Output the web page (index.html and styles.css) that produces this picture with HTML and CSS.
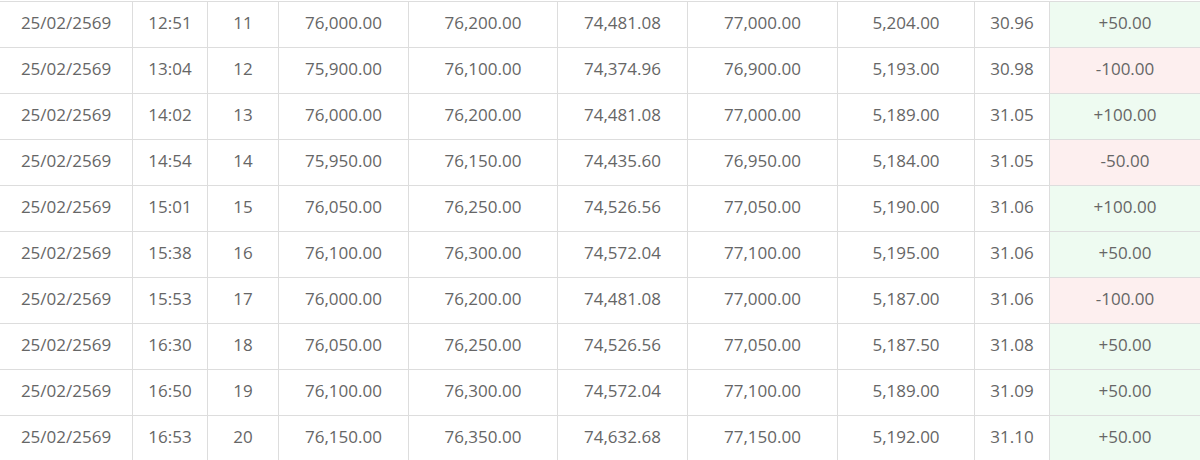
FILE: index.html
```html
<!DOCTYPE html>
<html lang="th">
<head>
<meta charset="utf-8">
<title>Gold price history</title>
<link rel="stylesheet" href="styles.css">
</head>
<body>
<div class="wrap">
<table class="prices">
<colgroup>
<col class="c-date"><col class="c-time"><col class="c-no"><col class="c-a"><col class="c-b"><col class="c-c"><col class="c-d"><col class="c-e"><col class="c-f"><col class="c-g">
</colgroup>
<tbody>
<tr><td>25/02/2569</td><td>12:51</td><td>11</td><td>76,000.00</td><td>76,200.00</td><td>74,481.08</td><td>77,000.00</td><td>5,204.00</td><td>30.96</td><td class="up">+50.00</td></tr>
<tr><td>25/02/2569</td><td>13:04</td><td>12</td><td>75,900.00</td><td>76,100.00</td><td>74,374.96</td><td>76,900.00</td><td>5,193.00</td><td>30.98</td><td class="down">-100.00</td></tr>
<tr><td>25/02/2569</td><td>14:02</td><td>13</td><td>76,000.00</td><td>76,200.00</td><td>74,481.08</td><td>77,000.00</td><td>5,189.00</td><td>31.05</td><td class="up">+100.00</td></tr>
<tr><td>25/02/2569</td><td>14:54</td><td>14</td><td>75,950.00</td><td>76,150.00</td><td>74,435.60</td><td>76,950.00</td><td>5,184.00</td><td>31.05</td><td class="down">-50.00</td></tr>
<tr><td>25/02/2569</td><td>15:01</td><td>15</td><td>76,050.00</td><td>76,250.00</td><td>74,526.56</td><td>77,050.00</td><td>5,190.00</td><td>31.06</td><td class="up">+100.00</td></tr>
<tr><td>25/02/2569</td><td>15:38</td><td>16</td><td>76,100.00</td><td>76,300.00</td><td>74,572.04</td><td>77,100.00</td><td>5,195.00</td><td>31.06</td><td class="up">+50.00</td></tr>
<tr><td>25/02/2569</td><td>15:53</td><td>17</td><td>76,000.00</td><td>76,200.00</td><td>74,481.08</td><td>77,000.00</td><td>5,187.00</td><td>31.06</td><td class="down">-100.00</td></tr>
<tr><td>25/02/2569</td><td>16:30</td><td>18</td><td>76,050.00</td><td>76,250.00</td><td>74,526.56</td><td>77,050.00</td><td>5,187.50</td><td>31.08</td><td class="up">+50.00</td></tr>
<tr><td>25/02/2569</td><td>16:50</td><td>19</td><td>76,100.00</td><td>76,300.00</td><td>74,572.04</td><td>77,100.00</td><td>5,189.00</td><td>31.09</td><td class="up">+50.00</td></tr>
<tr><td>25/02/2569</td><td>16:53</td><td>20</td><td>76,150.00</td><td>76,350.00</td><td>74,632.68</td><td>77,150.00</td><td>5,192.00</td><td>31.10</td><td class="up">+50.00</td></tr>
</tbody>
</table>
</div>
</body>
</html>
```

FILE: styles.css
```css
html, body {
  margin: 0;
  padding: 0;
  background: #ffffff;
}
body {
  font-family: "Open Sans", "Noto Sans", sans-serif;
  color: #666666;
  overflow: hidden;
}
.wrap {
  padding-top: 1px;
}
.prices {
  table-layout: fixed;
  border-collapse: separate;
  border-spacing: 0;
  width: 1201px;
  border-top: 1px solid #dddddd;
}
.prices td {
  box-sizing: border-box;
  height: 46px;
  padding: 0 0 3px;
  text-align: center;
  vertical-align: middle;
  font-size: 17px;
  line-height: 22px;
  border-right: 1px solid #dddddd;
  border-bottom: 1px solid #dddddd;
  white-space: nowrap;
}
.c-date { width: 133px; }
.c-time { width: 75px; }
.c-no { width: 71px; }
.c-a { width: 130px; }
.c-b { width: 149px; }
.c-c { width: 130px; }
.c-d { width: 150px; }
.c-e { width: 137px; }
.c-f { width: 75px; }
.c-g { width: 151px; }
.prices td.up { background: #eefbf1; }
.prices td.down { background: #fdefef; }
```
